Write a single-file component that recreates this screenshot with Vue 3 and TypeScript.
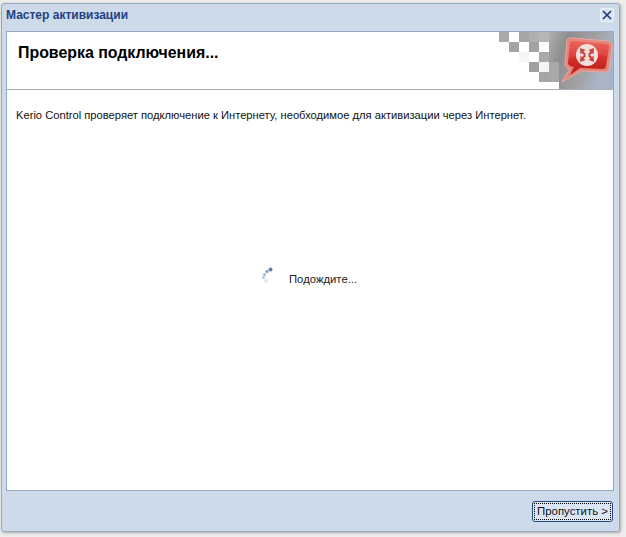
<script setup lang="ts">
const tiles: [number, number, string][] = [
  [0,0,'#a9a9a9'],[2,0,'#a5a5a5'],[3,0,'#b0b0b0'],[4,0,'#b5b5b5'],
  [1,1,'#a3a3a3'],[3,1,'#a3a3a3'],[4,1,'#fbfbfb'],
  [2,2,'#f6f6f6'],[3,2,'#ffffff'],[4,2,'#a9a9a9'],
  [3,3,'#a0a0a0'],[4,3,'#f5f5f5'],[5,3,'#a8a8a8'],
  [3,4,'#ffffff'],[4,4,'#a6a6a6'],[5,4,'#a8a8a8'],
]
</script>

<template>
  <div class="page">
    <div class="window">
      <div class="titlebar">
        <span class="title">Мастер активизации</span>
        <button class="close" aria-label="Закрыть">
          <svg width="10" height="10" viewBox="0 0 10 10"><path d="M1 1 9 9M9 1 1 9" stroke="#1f3f78" stroke-width="1.7" fill="none"/></svg>
        </button>
      </div>
      <div class="body">
        <header class="head">
          <h1>Проверка подключения...</h1>
          <svg class="banner" width="114" height="57" viewBox="0 0 114 57">
            <defs>
              <linearGradient id="bg" x1="0" x2="1" y1="0" y2="0.2">
                <stop offset="0.4" stop-color="#b4b4b4"/>
                <stop offset="0.6" stop-color="#8f8d8d"/>
                <stop offset="0.85" stop-color="#a3a3a6"/>
                <stop offset="1" stop-color="#a9b4c6"/>
              </linearGradient>
              <linearGradient id="bubble" x1="0" x2="0" y1="0" y2="1">
                <stop offset="0" stop-color="#e8584c"/>
                <stop offset="0.5" stop-color="#d8302a"/>
                <stop offset="1" stop-color="#b21a18"/>
              </linearGradient>
            </defs>
            <rect width="114" height="57" fill="url(#bg)"/>
            <path d="M0 0H40V40H30V50H0Z" fill="#fff"/>
            <path d="M0 0H10V10H20V20H30V30H50V40H60V57H0Z" fill="#fff"/>
            <rect v-for="(t, i) in tiles" :key="i" :x="t[0] * 10" :y="t[1] * 10" width="10" height="10" :fill="t[2]"/>
            <path d="M68 8 Q69 5 73 6 L108 9 Q114 10 113 15 L110 36 Q109 41 104 40 L82 39 L63 50 L71 37 Q66 36 66 32 Z" fill="#e8857b" stroke="#e9a9a2" stroke-width="1"/>
            <path d="M71 11 Q72 9 74 9 L106 12 Q110 12 110 15 L107 34 Q107 37 103 37 L81 36 L71 43 L75 35 Q69 34 69 31 Z" fill="url(#bubble)"/>
            <path d="M71 11 Q72 9 74 9 L106 12 Q110 12 110 15 L109 24 Q90 20 70 26 Z" fill="#fff" opacity=".08"/>
            <circle cx="88" cy="23" r="11" fill="#f3dfdb"/>
            <g fill="#c8443a">
              <path d="M81 16 86.5 18 84.5 19.5 87 22 85.5 23.5 83 21 81.5 22.5Z"/>
              <path d="M95 16 89.5 18 91.5 19.5 89 22 90.5 23.5 93 21 94.5 22.5Z"/>
              <path d="M81 30 86.5 28 84.5 26.5 87 24 85.5 22.8 83 25 81.5 23.8Z"/>
              <path d="M95 30 89.5 28 91.5 26.5 89 24 90.5 22.8 93 25 94.5 23.8Z"/>
            </g>
          </svg>
        </header>
        <p class="info">Kerio Control проверяет подключение к Интернету, необходимое для активизации через Интернет.</p>
        <div class="wait">
          <svg class="spinner" width="14" height="18" viewBox="0 0 14 18">
            <circle cx="9.5" cy="2.5" r="2" fill="#5b82ae"/>
            <circle cx="6" cy="4.5" r="1.7" fill="#87a5c6"/>
            <circle cx="3.5" cy="7.5" r="1.6" fill="#a9bdd6"/>
            <circle cx="2.5" cy="10.5" r="1.7" fill="#c4d0e2"/>
            <circle cx="5" cy="14" r="2" fill="#e2e7f0"/>
          </svg>
          <span class="wait-text">Подождите...</span>
        </div>
      </div>
      <div class="foot">
        <button class="next"><span>Пропустить &gt;</span></button>
      </div>
    </div>
  </div>
</template>

<style>
html, body { margin: 0; background: #ededed; }
</style>

<style scoped>
.page {
  width: 626px;
  height: 537px;
  padding: 3px 6px 5px 1px;
  box-sizing: border-box;
  background: #ededed;
  font-family: "Liberation Sans", Arial, sans-serif;
}
.window {
  height: 100%;
  box-sizing: border-box;
  background: #cddaea;
  border: 1px solid #98a8bc;
  border-radius: 3px;
  box-shadow: 1px 1px 3px rgba(120, 120, 120, .55);
  display: flex;
  flex-direction: column;
  padding: 0 5px 0 4px;
}
.titlebar {
  height: 27px;
  padding: 0 0 5px 0;
  box-sizing: border-box;
  flex: none;
  display: flex;
  align-items: center;
  justify-content: space-between;
}
.title {
  color: #1e4284;
  font-size: 12px;
  font-weight: 700;
}
.close {
  width: 12px;
  height: 12px;
  padding: 0;
  border: 1px solid #eef3fa;
  border-radius: 2px;
  background: #d9e4f3;
  display: flex;
  align-items: center;
  justify-content: center;
  box-sizing: content-box;
}
.body {
  height: 460px;
  flex: none;
  box-sizing: border-box;
  background: #fff;
  border: 1px solid #96a8c4;
  display: flex;
  flex-direction: column;
}
.head {
  height: 58px;
  flex: none;
  box-sizing: border-box;
  border-bottom: 1px solid #a6aeb9;
  display: flex;
  justify-content: space-between;
}
.head h1 {
  margin: 12px 0 0 11px;
  font-size: 15.9px;
  line-height: 18px;
  font-weight: 700;
  color: #000;
}
.banner { flex: none; display: block; }
.info {
  margin: 18px 0 0 9px;
  font-size: 11.18px;
  line-height: 14px;
  color: #111;
}
.wait {
  margin: 147px 0 0 254px;
  display: flex;
  align-items: center;
  gap: 14px;
  height: 20px;
}
.spinner { position: relative; top: -3px; }
.wait-text {
  font-size: 11.3px;
  color: #222;
}
.foot {
  flex: 1;
  display: flex;
  justify-content: flex-end;
  align-items: flex-start;
  padding: 10px 1px 0 0;
}
.next {
  width: 81px;
  height: 21px;
  padding: 1px;
  box-sizing: border-box;
  border: 1px solid #234a82;
  border-radius: 3px;
  background: #dbe6f4;
  font: 11.4px "Liberation Sans", Arial, sans-serif;
  color: #111;
}
.next span {
  display: block;
  height: 100%;
  line-height: 15px;
  box-sizing: border-box;
  border: 1px dotted #000;
}
</style>
